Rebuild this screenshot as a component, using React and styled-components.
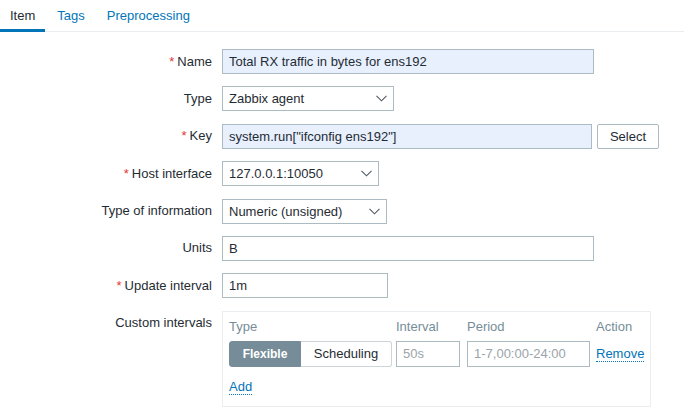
import React from 'react'
import styled, { createGlobalStyle } from 'styled-components'

const GlobalStyle = createGlobalStyle`
  body {
    margin: 0;
    background: #ffffff;
    font-family: "Liberation Sans", Arial, sans-serif;
    font-size: 13px;
    color: #1f2c33;
  }
`

function Chevron() {
  return (
    <svg width="11" height="7" viewBox="0 0 11 7">
      <polyline points="0.5,0.8 5.5,5.8 10.5,0.8" fill="none" stroke="#4f5b62" strokeWidth="1.1" />
    </svg>
  )
}

function Select({ width, children }) {
  return (
    <SelectBox width={width}>
      <span>{children}</span>
      <Chevron />
    </SelectBox>
  )
}

function App() {
  return (
    <Page>
      <GlobalStyle />
      <TabBar>
        <Tab active>Item</Tab>
        <Tab>Tags</Tab>
        <Tab>Preprocessing</Tab>
      </TabBar>

      <Form>
        <Label required>Name</Label>
        <Control>
          <TextInput width={372} filled readOnly value="Total RX traffic in bytes for ens192" />
        </Control>

        <Label>Type</Label>
        <Control>
          <Select width={172}>Zabbix agent</Select>
        </Control>

        <Label required>Key</Label>
        <Control>
          <TextInput width={370} filled readOnly value={'system.run["ifconfig ens192"]'} />
          <Button>Select</Button>
        </Control>

        <Label required>Host interface</Label>
        <Control>
          <Select width={157}>127.0.0.1:10050</Select>
        </Control>

        <Label>Type of information</Label>
        <Control>
          <Select width={165}>Numeric (unsigned)</Select>
        </Control>

        <Label>Units</Label>
        <Control>
          <TextInput width={372} readOnly value="B" />
        </Control>

        <Label required>Update interval</Label>
        <Control>
          <TextInput width={166} readOnly value="1m" />
        </Control>

        <Label top>Custom intervals</Label>
        <Control>
          <IntervalBox>
            <IntervalGrid>
              <HeadCell>Type</HeadCell>
              <HeadCell>Interval</HeadCell>
              <HeadCell>Period</HeadCell>
              <HeadCell>Action</HeadCell>

              <Segmented>
                <Segment active>Flexible</Segment>
                <Segment>Scheduling</Segment>
              </Segmented>
              <TextInput width={64} height={26} readOnly placeholder="50s" />
              <TextInput width={123} height={26} readOnly placeholder="1-7,00:00-24:00" />
              <div>
                <LinkText>Remove</LinkText>
              </div>
            </IntervalGrid>
            <AddRow>
              <LinkText>Add</LinkText>
            </AddRow>
          </IntervalBox>
        </Control>
      </Form>
    </Page>
  )
}

export default App

const Page = styled.div`
  width: 684px;
  min-height: 415px;
`

const TabBar = styled.div`
  display: flex;
  gap: 2px;
  border-bottom: 1px solid #ebeef0;
`

const Tab = styled.div`
  padding: 7px 10px 4px;
  line-height: 18px;
  margin-bottom: -1px;
  color: ${(p) => (p.active ? '#1f2c33' : '#0275b8')};
  border-bottom: 3px solid ${(p) => (p.active ? '#0275b8' : 'transparent')};
`

const Form = styled.div`
  display: grid;
  grid-template-columns: 212px 1fr;
  column-gap: 10px;
  row-gap: 12.4px;
  align-items: center;
  padding-top: 17px;
`

const Label = styled.div`
  text-align: right;
  line-height: 18px;
  align-self: ${(p) => (p.top ? 'start' : 'center')};
  padding-top: ${(p) => (p.top ? '3px' : '0')};

  &::before {
    content: ${(p) => (p.required ? "'*'" : 'none')};
    color: #e33734;
    margin-right: 3px;
  }
`

const Control = styled.div`
  display: flex;
  align-items: center;
  gap: 5px;
`

const TextInput = styled.input`
  box-sizing: border-box;
  width: ${(p) => p.width}px;
  height: ${(p) => p.height || 25}px;
  padding: 0 6px;
  border: 1px solid #acbbc2;
  border-radius: 0;
  background: ${(p) => (p.filled ? '#e8f0fe' : '#ffffff')};
  font-family: "Liberation Sans", Arial, sans-serif;
  font-size: 13px;
  color: #1f2c33;
  outline: none;

  &::placeholder {
    color: #9aa4aa;
  }
`

const SelectBox = styled.div`
  box-sizing: border-box;
  width: ${(p) => p.width}px;
  height: 25px;
  padding: 0 6px;
  display: flex;
  align-items: center;
  justify-content: space-between;
  border: 1px solid #acbbc2;
  background: #ffffff;
  color: #1f2c33;
`

const Button = styled.div`
  box-sizing: border-box;
  width: 62px;
  height: 25px;
  display: flex;
  align-items: center;
  justify-content: center;
  border: 1px solid #acbbc2;
  border-radius: 2px;
  background: #ffffff;
  color: #1f2c33;
`

const IntervalBox = styled.div`
  box-sizing: border-box;
  width: 429px;
  border: 1px solid #ebeef0;
  padding: 6px 6px 10px;
`

const IntervalGrid = styled.div`
  display: grid;
  grid-template-columns: 167px 71px 129px auto;
  row-gap: 5px;
  align-items: center;
`

const HeadCell = styled.div`
  color: #768d99;
  line-height: 18px;
`

const Segmented = styled.div`
  display: flex;
  width: 163px;
  height: 26px;
`

const Segment = styled.div`
  box-sizing: border-box;
  flex: ${(p) => (p.active ? '0 0 72px' : '1')};
  display: flex;
  align-items: center;
  justify-content: center;
  border: 1px solid ${(p) => (p.active ? '#768d99' : '#ccd5d9')};
  border-left-width: ${(p) => (p.active ? '1px' : '0')};
  border-radius: ${(p) => (p.active ? '3px 0 0 3px' : '0 3px 3px 0')};
  background: ${(p) => (p.active ? '#768d99' : '#ffffff')};
  color: ${(p) => (p.active ? '#ffffff' : '#1f2c33')};
  font-weight: ${(p) => (p.active ? 'bold' : 'normal')};
  font-size: ${(p) => (p.active ? '12px' : '13px')};
`

const LinkText = styled.span`
  color: #0275b8;
  line-height: 18px;
  border-bottom: 1px dotted #0275b8;
`

const AddRow = styled.div`
  margin-top: 11px;
  line-height: 18px;
`
